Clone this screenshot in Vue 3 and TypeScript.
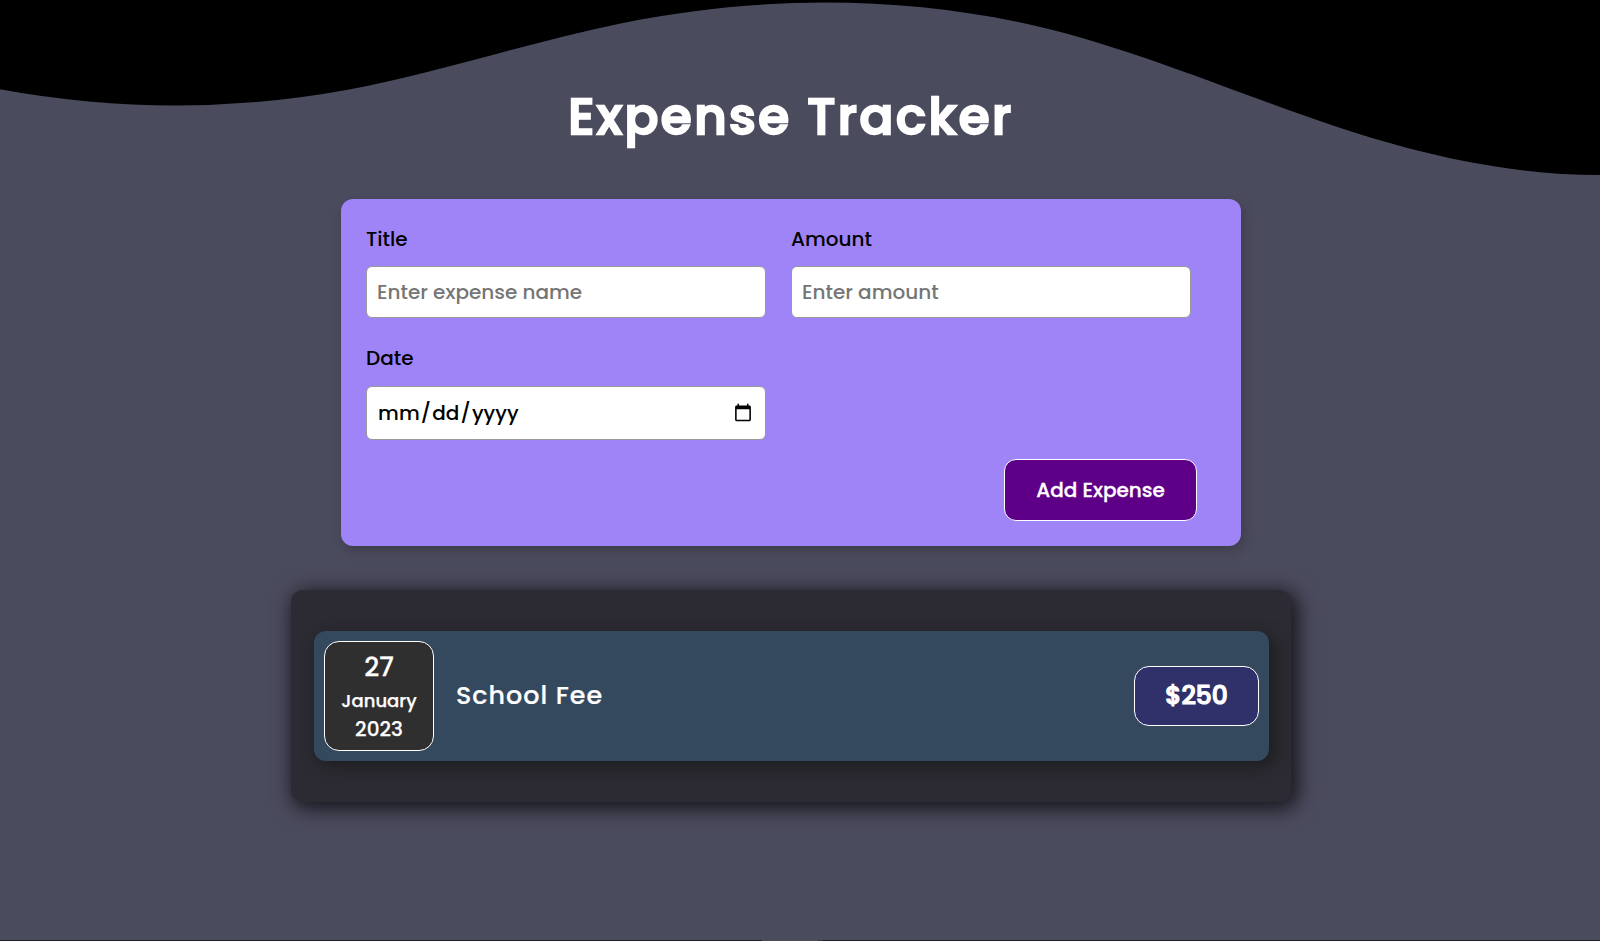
<script setup lang="ts">
import { ref } from 'vue'

interface Expense {
  id: number
  day: string
  month: string
  year: string
  title: string
  amount: number
}

const title = ref('')
const amount = ref('')
const date = ref('')
const expenses = ref<Expense[]>([
  { id: 1, day: '27', month: 'January', year: '2023', title: 'School Fee', amount: 250 },
])

const months = ['January', 'February', 'March', 'April', 'May', 'June', 'July', 'August', 'September', 'October', 'November', 'December']

function addExpense(): void {
  if (!title.value || !amount.value || !date.value) return
  const [year, month, day] = date.value.split('-')
  expenses.value.push({
    id: expenses.value.length + 1,
    day,
    month: months[Number(month) - 1],
    year,
    title: title.value,
    amount: Number(amount.value),
  })
  title.value = ''
  amount.value = ''
  date.value = ''
}
</script>

<template>
  <div class="page">
    <svg class="wave" viewBox="0 0 1200 120" preserveAspectRatio="none" aria-hidden="true">
      <path d="M321.39,56.44c58-10.79,114.16-30.13,172-41.86,82.39-16.72,168.19-17.73,250.45-.39C823.78,31,906.67,72,985.66,92.83c70.05,18.48,146.53,26.09,214.34,3V0H0V27.35A600.21,600.21,0,0,0,321.39,56.44Z" />
    </svg>
    <main class="content">
      <h1>Expense Tracker</h1>
      <form class="form" @submit.prevent="addExpense">
        <div class="fields">
          <div class="field">
            <label for="title">Title</label>
            <input id="title" v-model="title" type="text" placeholder="Enter expense name" />
          </div>
          <div class="field">
            <label for="amount">Amount</label>
            <input id="amount" v-model="amount" type="text" placeholder="Enter amount" />
          </div>
          <div class="field field-date">
            <label for="date">Date</label>
            <input id="date" v-model="date" class="date-input" type="date" />
          </div>
        </div>
        <div class="actions">
          <button type="submit">Add Expense</button>
        </div>
      </form>
      <section class="list">
        <article v-for="e in expenses" :key="e.id" class="item">
          <div class="date">
            <div class="day">{{ e.day }}</div>
            <div class="month">{{ e.month }}</div>
            <div class="year">{{ e.year }}</div>
          </div>
          <h2>{{ e.title }}</h2>
          <div class="price">${{ e.amount }}</div>
        </article>
      </section>
    </main>
    <div class="edge"><i></i><b></b></div>
  </div>
</template>

<style>
html,
body {
  margin: 0;
  background: #4b4b5e;
  overflow: hidden;
}
</style>

<style scoped>
* {
  box-sizing: border-box;
}
.page {
  position: relative;
  height: 941px;
  overflow: hidden;
  background: #4b4b5e;
  font-family: Poppins, Inter, "Liberation Sans", sans-serif;
  font-weight: 500;
}
.wave {
  position: absolute;
  top: 0;
  left: -164px;
  width: 1911px;
  height: 190.7px;
  fill: #000;
}
.content {
  position: relative;
  width: 1582px;
  display: flex;
  flex-direction: column;
  align-items: center;
}
h1 {
  margin: 0;
  height: 199px;
  padding-top: 77px;
  font-size: 50px;
  line-height: 80px;
  font-weight: 500;
  -webkit-text-stroke: 2.3px #fff;
  letter-spacing: 2.5px;
  color: #fff;
  white-space: nowrap;
}
.form {
  width: 900px;
  height: 347px;
  padding: 24px 44px 24px 25px;
  border-radius: 12px;
  background: #9f84f7;
  box-shadow: 3px 5px 12px rgba(0, 0, 0, 0.2);
}
.fields {
  display: grid;
  grid-template-columns: 400px 400px;
  column-gap: 25px;
  grid-template-rows: 119px 117px;
}
label {
  display: block;
  height: 43px;
  line-height: 33px;
  font-size: 20px;
  font-weight: 500;
  color: #000;
}
input {
  display: block;
  width: 400px;
  height: 52px;
  padding: 0 10px;
  border: 1px solid #999;
  border-radius: 6px;
  background: #fff;
  color: #000;
  outline: none;
  font-family: inherit;
  font-size: 20px;
  font-weight: 500;
}
input::placeholder {
  color: #757575;
}
.field-date label {
  height: 44px;
}
.date-input {
  height: 54px;
  letter-spacing: 0.1px;
}
.actions {
  display: flex;
  justify-content: flex-end;
}
button {
  width: 193px;
  height: 62px;
  padding: 0;
  border: 1px solid #fff;
  border-radius: 12px;
  background: #5e0087;
  color: #fff;
  font-family: inherit;
  font-size: 20px;
  font-weight: 500;
  -webkit-text-stroke: 0.3px #fff;
}
.list {
  width: 1000px;
  height: 212px;
  margin-top: 44px;
  padding: 41px 22px 41px 23px;
  border-radius: 12px;
  background: #2c2b33;
  box-shadow: 4px 4px 20px 3px rgba(0, 0, 0, 0.7);
}
.item {
  display: flex;
  align-items: center;
  height: 130px;
  padding: 10px;
  border-radius: 12px;
  background: #34495e;
  box-shadow: 5px 5px 15px 1px rgba(28, 30, 31, 0.95);
  color: #fff;
}
.date {
  width: 110px;
  height: 110px;
  padding-top: 7px;
  border: 1px solid #fff;
  border-radius: 15px;
  background: #2f2f2f;
  text-align: center;
  -webkit-text-stroke: 0.25px #fff;
}
.day {
  height: 37px;
  line-height: 37px;
  font-size: 26px;
}
.month {
  height: 28px;
  line-height: 29px;
  font-size: 18px;
}
.year {
  height: 28px;
  line-height: 31px;
  font-size: 20px;
}
h2 {
  flex: 1;
  margin: 0 0 2px 22px;
  font-size: 25.4px;
  font-weight: 500;
  letter-spacing: 1px;
  -webkit-text-stroke: 0.2px #fff;
}
.price {
  width: 125px;
  height: 60px;
  line-height: 58px;
  border: 1px solid #fff;
  border-radius: 15px;
  background: #30316a;
  text-align: center;
  font-size: 25px;
  -webkit-text-stroke: 1.2px #fff;
}
.edge {
  position: absolute;
  left: 0;
  right: 0;
  bottom: 0;
  height: 1px;
  display: flex;
  padding-left: 762px;
  background: #1f1e26;
}
.edge i {
  width: 56px;
  background: #4f4a4b;
}
.edge b {
  width: 5px;
  background: #363645;
}
</style>
